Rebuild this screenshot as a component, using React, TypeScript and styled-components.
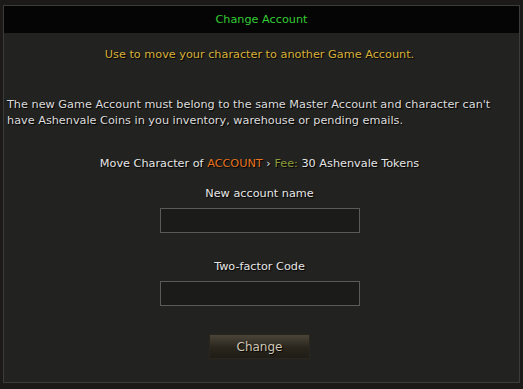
import React from 'react';
import styled, { createGlobalStyle } from 'styled-components';

const GlobalStyle = createGlobalStyle`
  html, body {
    margin: 0;
    padding: 0;
    background: #1b1a18;
  }
  body {
    font-family: "DejaVu Sans", Tahoma, sans-serif;
    font-size: 11.25px;
    color: #e6e6e6;
  }
`

const Page = styled.div`
  padding: 5px 3px 4px 3px;
`
const Panel = styled.div`
  border: 1px solid #3b3b39;
  background: #222220;
  height: 378px;
  box-sizing: border-box;
  display: flex;
  flex-direction: column;
`
const Header = styled.div`
  background: #050505;
  height: 27px;
  display: flex;
  align-items: center;
  justify-content: center;
  color: #33cc33;
  font-size: 11.25px;
  padding-bottom: 1px;
  box-sizing: border-box;
`
const Body = styled.div`
  display: flex;
  flex-direction: column;
  align-items: center;
  padding: 14px 7px 0 3px;
  text-shadow: 1px 1px 1px #000;
`
const Notice = styled.p`
  margin: 0;
  color: #d8b13a;
  line-height: 16px;
`
const Info = styled.p`
  margin: 34px 0 0 0;
  align-self: stretch;
  line-height: 16px;
  color: #dcdcdc;
`
const Summary = styled.p`
  margin: 27px 0 0 0;
  line-height: 16px;
`
const Highlight = styled.span<{ $tone: string }>`
  color: ${p => p.$tone};
`
const Field = styled.div<{ $gap: number }>`
  display: flex;
  flex-direction: column;
  align-items: center;
  margin-top: ${p => p.$gap}px;
`
const Label = styled.label`
  line-height: 16px;
  margin-bottom: 6px;
`
const Input = styled.input`
  width: 200px;
  height: 25px;
  box-sizing: border-box;
  border: 1px solid #5a5a58;
  background: #1b1b1a;
  color: #ddd;
  outline: none;
`
const Button = styled.button`
  margin-top: 28px;
  width: 101px;
  height: 25px;
  border: 1px solid #2a261d;
  background: linear-gradient(#4a4438, #2a261e 55%, #1f1c16);
  color: #cfc6b4;
  font-family: inherit;
  font-size: 12px;
  text-shadow: 1px 1px 1px #000;
  cursor: pointer;
`

export default function App() {
  return (
    <>
      <GlobalStyle />
      <Page>
        <Panel>
          <Header>Change Account</Header>
          <Body>
            <Notice>Use to move your character to another Game Account.</Notice>
            <Info>
              The new Game Account must belong to the same Master Account and character can't
              have Ashenvale Coins in you inventory, warehouse or pending emails.
            </Info>
            <Summary>
              Move Character of <Highlight $tone="#e8731e">ACCOUNT</Highlight> ›{' '}
              <Highlight $tone="#8d9c3c">Fee:</Highlight> 30 Ashenvale Tokens
            </Summary>
            <Field $gap={14}>
              <Label>New account name</Label>
              <Input />
            </Field>
            <Field $gap={26}>
              <Label>Two-factor Code</Label>
              <Input />
            </Field>
            <Button>Change</Button>
          </Body>
        </Panel>
      </Page>
    </>
  );
}
